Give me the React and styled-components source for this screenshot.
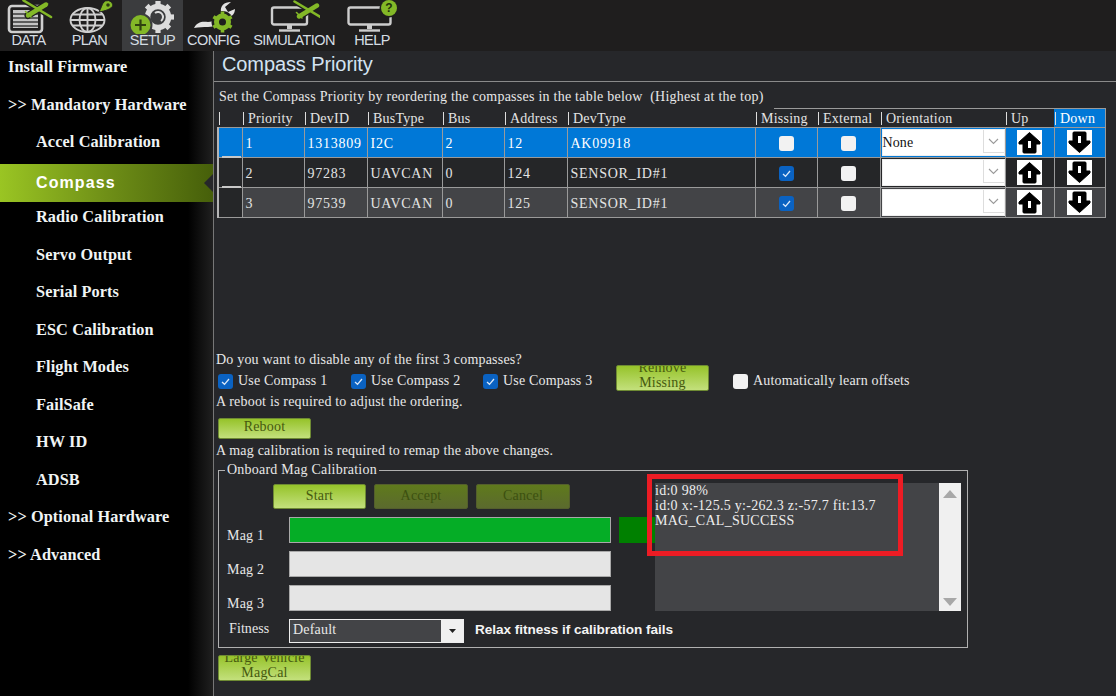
import React from "react";
import styled, { createGlobalStyle } from "styled-components";

const Global = createGlobalStyle`
  html, body { margin: 0; padding: 0; background: #26272a; }
  body { font-family: "Liberation Serif", "Times New Roman", serif; color: #e8e8e8; }
  * { box-sizing: border-box; }
`;

const Page = styled.div`
  width: 1116px; height: 696px; overflow: hidden; position: relative;
  display: flex; flex-direction: column; background: #26272a;
`;
const NavBar = styled.nav`
  height: 51px; flex: none; display: flex; background: #1f1e1e;
`;
const NavItem = styled.div`
  width: ${p => p.$w}px; height: 51px; display: flex; flex-direction: column; align-items: center;
  background: ${p => (p.$active ? "#3b3c3e" : "transparent")};
  svg { display: block; width: 52px; height: 34px; flex: none; }
`;
const NavLabel = styled.span`
  font: 14.5px/15px "Liberation Sans", Arial, sans-serif; color: #d5dde3; margin-top: -1.5px; letter-spacing: -0.6px; white-space: nowrap;
`;
const Body = styled.div`flex: 1; display: flex; min-height: 0;`;
const Side = styled.aside`
  width: 214px; flex: none;
  background: linear-gradient(90deg, #000 0, #000 188px, #202020 213px, #777 213px, #777 214px);
`;
const SideList = styled.div`margin-top: -2.5px; display: flex; flex-direction: column;`;
const SideItem = styled.div`
  height: 37.5px; flex: none; display: flex; align-items: center; white-space: nowrap;
  padding-left: ${p => (p.$sub ? 36 : 8)}px;
  font: bold 16.3px "Liberation Serif", serif; color: #f0f4f4; letter-spacing: 0.1px;
`;
const SideActive = styled(SideItem)`
  height: 38px; margin: 2.5px 1px -3px 0; position: relative;
  font: bold 16px "Liberation Sans", Arial, sans-serif; letter-spacing: 1.1px; color: #fff;
  background: linear-gradient(90deg, #9ac523 0, #6f8f17 50%, #465f0a 100%);
  &::after {
    content: ""; position: absolute; right: 0; top: 10px; width: 0; height: 0;
    border: 9px solid transparent; border-left-width: 0; border-right-color: #26272a;
    border-right-width: 9px;
  }
`;
const Main = styled.main`flex: 1; display: flex; flex-direction: column; min-width: 0;`;
const TitleBar = styled.header`
  height: 31px; flex: none; padding-left: 8px; border-bottom: 1px solid #8a8a8a;
  font: 20px/26px "Liberation Sans", Arial, sans-serif; color: #d3e3f2; letter-spacing: -0.1px;
`;
const Note = styled.div`
  font-size: 14px; line-height: 20px; white-space: nowrap; letter-spacing: 0.2px; padding-left: 2px; flex: none;
`;
const Intro = styled(Note)`
  position: relative; z-index: 1; width: 560px; height: 27px; background: #26272a;
  padding: 5px 0 0 5px; margin-bottom: -1px; letter-spacing: 0.245px;
`;
const Table = styled.table`
  margin-left: 3px; width: 887px; table-layout: fixed; border-collapse: collapse; flex: none; height: 110px;
  border-top: 1px solid #9a9a9a; border-right: 1px solid #9a9a9a; font-size: 14px;
`;
const Head = styled.th`
  height: 19px; padding: 1px 0 0 1px; font-weight: normal; text-align: left; white-space: nowrap; letter-spacing: 0.25px;
  color: ${p => (p.$down ? "#fff" : "#e4e4e4")}; background: ${p => (p.$down ? "#0078d7" : "transparent")};
  &::before { content: ""; display: inline-block; width: 1px; height: 13px; background: #ddd; margin-right: 4px; vertical-align: -2px; }
  border-bottom: 1px solid #9a9a9a;
`;
const Row = styled.tr`
  height: 30px; background: ${p => p.$bg};
  color: ${p => (p.$sel ? "#fff" : "#e4e4e4")};
`;
const Corner = styled.td`
  border-left: 2px solid #b5b5b5; border-right: 1px solid #9a9a9a; border-bottom: 1px solid #9a9a9a;
  background: ${p => (p.$sel ? "#0078d7" : "#252628")}; padding: 0; position: relative;
  &::after { content: ""; position: absolute; left: 3px; right: 1px; bottom: -1px; height: 2px; background: ${p => (p.$last ? "transparent" : "#c8c8c8")}; }
`;
const Cell = styled.td`
  border: 1px solid #9a9a9a; padding: 2px 0 0 3px; white-space: nowrap; letter-spacing: 0.75px; overflow: hidden;
`;
const CenterCell = styled(Cell)`padding: 0; text-align: center; vertical-align: middle;`;
const ComboCell = styled(Cell)`padding: 1px;`;
const Combo = styled.div`
  height: 27px; background: #fff; color: #111; display: flex; align-items: center; border: 1px solid #efefef;
  padding: 1px 0 0 0; letter-spacing: 0.1px; position: relative; width: 123px;
`;
const ComboArrow = styled.span`
  position: absolute; right: 0; top: 0; bottom: 2px; width: 21px; border-left: 1px solid #ddd; border-bottom: 1px solid #ddd;
  display: flex; align-items: center; justify-content: center; svg { display: block; }
`;
const Box = styled.span`
  display: inline-flex; align-items: center; justify-content: center; width: 15px; height: 15px; border-radius: 3px;
  background: ${p => (p.$on ? "#0a62c2" : "#f2f2f2")}; vertical-align: middle; flex: none;
  svg { display: block; }
`;
const ArrowBtn = styled.span`
  display: inline-flex; width: 25px; height: 25px; background: #fff; vertical-align: middle; align-items: center; justify-content: center;
  svg { display: block; }
`;
const Spacer = styled.div`height: ${p => p.$h}px; flex: none;`;
const ChecksRow = styled.div`
  height: 22px; display: flex; align-items: center; padding-left: 4px; flex: none;
`;
const Check = styled.label`
  display: flex; align-items: center; gap: 5px; width: ${p => p.$w}px; font-size: 14px; letter-spacing: 0.17px; white-space: nowrap; flex: none;
  margin-left: ${p => p.$ml || 0}px;
`;
const GreenBtn = styled.div`
  width: ${p => p.$w}px; height: ${p => p.$h}px; flex: none; display: flex; justify-content: center; text-align: center;
  align-items: ${p => (p.$clip ? "flex-end" : "center")}; overflow: hidden; font-size: 14px; line-height: 15px; letter-spacing: 0.2px;
  padding-bottom: ${p => (p.$clip ? 0 : p.$pb ?? 3)}px;
  color: ${p => (p.$off ? "#3c5010" : "#46590f")}; border-radius: 2px; margin: ${p => p.$m || 0};
  background: ${p => (p.$off ? "linear-gradient(#5f7a1c, #5b6a2e)" : "linear-gradient(#96c32a, #c3e07c)")};
  border: 1px solid ${p => (p.$off ? "#545f2c" : "#6e8a33")};
`;
const Group = styled.section`
  width: 750px; height: 178px; margin: 9px 0 0 4px; border: 1px solid #b0b0b0; position: relative; flex: none;
  display: flex; flex-direction: column; padding-top: 13px;
`;
const Legend = styled.span`
  position: absolute; left: 6px; top: -9px; padding: 0 2px; background: #26272a; font-size: 14px; line-height: 15px; letter-spacing: 0.23px; white-space: nowrap;
`;
const GroupTop = styled.div`display: flex; height: 128px; flex: none;`;
const MagColumn = styled.div`width: 436px; flex: none; display: flex; flex-direction: column;`;
const CalButtons = styled.div`display: flex; gap: 8px; padding-left: 54px; height: 33px; flex: none;`;
const MagRow = styled.div`
  display: flex; align-items: center; height: 26px; margin-bottom: 8px; padding-left: 8px; font-size: 14px; flex: none; letter-spacing: 0.2px;
`;
const MagLabel = styled.span`width: 62px; flex: none; position: relative; top: 6px;`;
const MagBar = styled.div`
  width: 322px; height: 26px; flex: none; border: 1px solid #a9a9a9; background: ${p => (p.$on ? "#05ad26" : "#e5e5e5")};
`;
const MagBlock = styled.div`width: 36px; height: 26px; margin-left: 8px; flex: none; background: #008000;`;
const Log = styled.div`
  width: 306px; height: 128px; flex: none; background: #434447; display: flex; justify-content: space-between;
  font-size: 14px; line-height: 15px; color: #eee; letter-spacing: 0.28px; margin-top: -1px;
`;
const LogText = styled.div`padding: 0; white-space: pre-line;`;
const Scroll = styled.div`
  width: 22px; background: #f0f0f0; display: flex; flex-direction: column; justify-content: space-between; align-items: center; padding: 7px 0 5px;
  svg { display: block; }
`;
const FitRow = styled.div`
  display: flex; align-items: center; padding-left: 10px; height: 24px; margin-top: 7px; flex: none;
`;
const FitLabel = styled.span`width: 60px; font-size: 14px; letter-spacing: 0.1px; flex: none; margin-bottom: 4px;`;
const FitSelect = styled.div`
  width: 175px; height: 24px; background: #434447; border: 1px solid #eee; display: flex; font-size: 14px; align-items: center; padding: 0 0 0 3px; justify-content: space-between; flex: none; letter-spacing: 0.2px;
  line-height: 20px;
`;
const FitText = styled.span`margin-bottom: 2px;`;
const FitArrow = styled.span`
  width: 22px; height: 22px; background: #f0f0f0; display: flex; align-items: center; justify-content: center; svg { display: block; }
`;
const Relax = styled.span`
  margin: 0 0 3px 11px; font: bold 13.6px "Liberation Sans", Arial, sans-serif; color: #f4f4f4; letter-spacing: -0.04px; white-space: nowrap;
`;
const RedMark = styled.div`
  position: absolute; left: 647px; top: 474px; width: 256px; height: 82px; border: 5px solid #ed1c24; pointer-events: none;
`;

const Plane = ({ x, y, halo = "#1f1e1e" }) => {
  const wing = "M0.5 0.5 L28 17";
  const body = "M5 15.5 L23 4.5";
  const tail = "M2.5 11.5 L8 17";
  return (
    <g transform={`translate(${x} ${y})`} fill="none" strokeLinecap="round">
      <g stroke={halo}>
        <path d={body} strokeWidth="7" />
        <path d={wing} strokeWidth="5" />
      </g>
      <g stroke="#83b827">
        <path d={wing} strokeWidth="2.6" />
        <path d={body} strokeWidth="4.4" />
        <path d={tail} strokeWidth="1.6" />
      </g>
    </g>
  );
};
const DataIcon = () => (
  <svg viewBox="0 0 52 34">
    <rect x="6" y="6" width="33" height="26" rx="3" fill="none" stroke="#cfcfcf" strokeWidth="2.6" />
    <rect x="10" y="10" width="25" height="18" fill="#c4c4c4" />
    <path d="M10 14H35M10 18H35M10 22H35M10 26H35" stroke="#3a3a3a" strokeWidth="1.6" />
    <Plane x={20} y={0} />
  </svg>
);
const PlanIcon = () => (
  <svg viewBox="0 0 52 34">
    <g fill="none" stroke="#cfcfcf" strokeWidth="1.9">
      <ellipse cx="23.5" cy="20" rx="17" ry="12" />
      <ellipse cx="23.5" cy="20" rx="8" ry="12" />
      <path d="M6.5 20H40.5M9 14.5H38M9 25.5H38M23.5 8V32" />
    </g>
    <path d="M35 12 C37 8 38 5 39 3 A5.5 5.5 0 0 1 49 5 C48 9 41 11 35 12Z" fill="#83b827" stroke="#1f1e1e" strokeWidth="1" />
    <circle cx="44" cy="5" r="1.8" fill="#2b3a10" />
  </svg>
);
const SetupIcon = () => (
  <svg viewBox="0 0 52 34">
    <g transform="translate(31 17)">
      <circle r="10.5" fill="none" stroke="#dcdcdc" strokeWidth="5.5" />
      <g fill="#dcdcdc">
        {[0, 45, 90, 135, 180, 225, 270, 315].map(a => (
          <rect key={a} x="-2.6" y="-16" width="5.2" height="5" transform={`rotate(${a})`} />
        ))}
      </g>
      <path d="M-3 -4 A5 5 0 1 1 3 4" fill="none" stroke="#dcdcdc" strokeWidth="2" />
    </g>
    <circle cx="13.5" cy="25" r="12" fill="#3b3c3e" />
    <circle cx="13.5" cy="25" r="10" fill="#83b827" />
    <path d="M13.5 19.5V30.5M8 25H19" stroke="#2f4210" strokeWidth="2.2" />
  </svg>
);
const ConfigIcon = () => (
  <svg viewBox="0 0 52 34">
    <path d="M6 28 C9 22 14 21 20 22 C26 22 30 17 33 12 C32 6 36 2 43 2 L37 7 L40 12 L47 9 C47 15 42 18 37 18 C32 24 27 27 20 27 C15 27 11 27 6 28Z" fill="#e2e2e2" />
    <g transform="translate(34.5 22)">
      <circle r="11" fill="#1f1e1e" />
      <circle r="6" fill="none" stroke="#83b827" strokeWidth="5" />
      <g fill="#83b827">
        {[0, 60, 120, 180, 240, 300].map(a => (
          <rect key={a} x="-1.8" y="-10.5" width="3.6" height="3" transform={`rotate(${a})`} />
        ))}
      </g>
    </g>
  </svg>
);
const Monitor = ({ x, w = 35 }) => (
  <g transform={`translate(${x} 0)`} fill="none" stroke="#cdcdcd">
    <rect x="1.5" y="7.5" width={w} height="17" rx="2" strokeWidth="2.4" />
    <path d={`M${w / 2 + 1.5} 25V29`} strokeWidth="5" />
    <path d={`M${w / 2 - 9} 30.5H${w / 2 + 12}`} strokeWidth="2.4" />
  </g>
);
const SimIcon = () => (
  <svg viewBox="0 0 52 34">
    <Monitor x={2.5} />
    <Plane x={26} y={1} />
  </svg>
);
const HelpIcon = () => (
  <svg viewBox="0 0 52 34">
    <Monitor x={1} w={42} />
    <circle cx="43" cy="8" r="9.5" fill="#1f1e1e" />
    <circle cx="43" cy="8" r="8" fill="#83b827" />
    <text x="43" y="12" textAnchor="middle" fontFamily="Liberation Sans" fontWeight="bold" fontSize="12" fill="#20300a">?</text>
  </svg>
);

const Tick = () => (
  <svg width="11" height="11" viewBox="0 0 11 11"><path d="M2 6 L4.5 8.3 L9 3" fill="none" stroke="#dbe9fa" strokeWidth="1.3" /></svg>
);
const CB = ({ on }) => <Box $on={on}>{on && <Tick />}</Box>;
const Up = () => (
  <ArrowBtn>
    <svg width="23" height="23" viewBox="0 0 23 23">
      <path d="M11.5 1.5 L22 11 V13 H18 V21 Q18 22 17 22 H6 Q5 22 5 21 V13 H1 V11Z" fill="#000" stroke="#000" strokeLinejoin="round" />
      <rect x="10" y="10" width="3" height="7" fill="#fff" />
    </svg>
  </ArrowBtn>
);
const Down = () => (
  <ArrowBtn>
    <svg width="23" height="23" viewBox="0 0 23 23">
      <path d="M11.5 21.5 L22 12 V10 H18 V2 Q18 1 17 1 H6 Q5 1 5 2 V10 H1 V12Z" fill="#000" stroke="#000" strokeLinejoin="round" />
      <rect x="10" y="5" width="3" height="7" fill="#fff" />
    </svg>
  </ArrowBtn>
);
const Chevron = () => (
  <svg width="11" height="7" viewBox="0 0 11 7"><path d="M1 1 L5.5 5.5 L10 1" fill="none" stroke="#9a9a9a" strokeWidth="1.1" /></svg>
);
const Tri = ({ down, w = 14, h = 8, c = "#a8a8a8" }) => (
  <svg width={w} height={h} viewBox="0 0 14 8"><path d={down ? "M0 0H14L7 8Z" : "M0 8H14L7 0Z"} fill={c} /></svg>
);

const nav = [
  ["DATA", 57, DataIcon], ["PLAN", 65, PlanIcon], ["SETUP", 61, SetupIcon],
  ["CONFIG", 61, ConfigIcon], ["SIMULATION", 100, SimIcon], ["HELP", 56, HelpIcon],
];
const cols = [24, 62, 63, 75, 62, 63, 188, 62, 63, 125, 49, 51];
const heads = ["Priority", "DevID", "BusType", "Bus", "Address", "DevType", "Missing", "External", "Orientation", "Up", "Down"];
const rows = [
  { v: ["1", "1313809", "I2C", "2", "12", "AK09918"], miss: false, bg: "#0078d7", sel: true, o: "None" },
  { v: ["2", "97283", "UAVCAN", "0", "124", "SENSOR_ID#1"], miss: true, bg: "#252628", o: "" },
  { v: ["3", "97539", "UAVCAN", "0", "125", "SENSOR_ID#1"], miss: true, bg: "#434447", o: "" },
];

export default function App() {
  return (
    <Page>
      <Global />
      <NavBar>
        {nav.map(([t, w, I]) => (
          <NavItem key={t} $w={w} $active={t === "SETUP"}>
            <I />
            <NavLabel>{t}</NavLabel>
          </NavItem>
        ))}
      </NavBar>
      <Body>
        <Side>
          <SideList>
            <SideItem>Install Firmware</SideItem>
            <SideItem>&gt;&gt; Mandatory Hardware</SideItem>
            <SideItem $sub>Accel Calibration</SideItem>
            <SideActive $sub>Compass</SideActive>
            <SideItem $sub>Radio Calibration</SideItem>
            <SideItem $sub>Servo Output</SideItem>
            <SideItem $sub>Serial Ports</SideItem>
            <SideItem $sub>ESC Calibration</SideItem>
            <SideItem $sub>Flight Modes</SideItem>
            <SideItem $sub>FailSafe</SideItem>
            <SideItem $sub>HW ID</SideItem>
            <SideItem $sub>ADSB</SideItem>
            <SideItem>&gt;&gt; Optional Hardware</SideItem>
            <SideItem>&gt;&gt; Advanced</SideItem>
          </SideList>
        </Side>
        <Main>
          <TitleBar>Compass Priority</TitleBar>
          <Intro>Set the Compass Priority by reordering the compasses in the table below&nbsp; (Highest at the top)</Intro>
          <Table>
            <colgroup>{cols.map((w, i) => <col key={i} style={{ width: w }} />)}</colgroup>
            <thead>
              <tr>
                <Head />
                {heads.map(h => <Head key={h} $down={h === "Down"}>{h}</Head>)}
              </tr>
            </thead>
            <tbody>
              {rows.map((r, i) => (
                <Row key={i} $bg={r.bg} $sel={r.sel}>
                  <Corner $sel={r.sel} $last={i === 2} />
                  {r.v.map((c, j) => <Cell key={j}>{c}</Cell>)}
                  <CenterCell><CB on={r.miss} /></CenterCell>
                  <CenterCell><CB /></CenterCell>
                  <ComboCell>
                    <Combo>{r.o}<ComboArrow><Chevron /></ComboArrow></Combo>
                  </ComboCell>
                  <CenterCell><Up /></CenterCell>
                  <CenterCell><Down /></CenterCell>
                </Row>
              ))}
            </tbody>
          </Table>
          <Spacer $h={132} />
          <Note>Do you want to disable any of the first 3 compasses?</Note>
          <ChecksRow>
            <Check $w={133}><CB on />Use Compass 1</Check>
            <Check $w={132}><CB on />Use Compass 2</Check>
            <Check $w={133}><CB on />Use Compass 3</Check>
            <GreenBtn $w={93} $h={26} $clip $m="-6px 0 0 0">Remove<br />Missing</GreenBtn>
            <Check $w={200} $ml={24}><CB />Automatically learn offsets</Check>
          </ChecksRow>
          <Note>A reboot is required to adjust the ordering.</Note>
          <Spacer $h={6} />
          <GreenBtn $w={93} $h={21} $pb={5} $m="0 0 0 4px">Reboot</GreenBtn>
          <Spacer $h={2} />
          <Note>A mag calibration is required to remap the above changes.</Note>
          <Group>
            <Legend>Onboard Mag Calibration</Legend>
            <GroupTop>
              <MagColumn>
                <CalButtons>
                  <GreenBtn $w={93} $h={25}>Start</GreenBtn>
                  <GreenBtn $w={94} $h={25} $off>Accept</GreenBtn>
                  <GreenBtn $w={94} $h={25} $off>Cancel</GreenBtn>
                </CalButtons>
                <MagRow><MagLabel>Mag 1</MagLabel><MagBar $on /><MagBlock /></MagRow>
                <MagRow><MagLabel>Mag 2</MagLabel><MagBar /></MagRow>
                <MagRow><MagLabel>Mag 3</MagLabel><MagBar /></MagRow>
              </MagColumn>
              <Log>
                <LogText>{"id:0 98%\nid:0 x:-125.5 y:-262.3 z:-57.7 fit:13.7\nMAG_CAL_SUCCESS"}</LogText>
                <Scroll><Tri /><Tri down /></Scroll>
              </Log>
            </GroupTop>
            <FitRow>
              <FitLabel>Fitness</FitLabel>
              <FitSelect><FitText>Default</FitText><FitArrow><Tri down w={7} h={4} c="#222" /></FitArrow></FitSelect>
              <Relax>Relax fitness if calibration fails</Relax>
            </FitRow>
          </Group>
          <Spacer $h={7} />
          <GreenBtn $w={93} $h={26} $clip $m="0 0 0 4px">Large Vehicle<br />MagCal</GreenBtn>
        </Main>
      </Body>
      <RedMark />
    </Page>
  );
}
